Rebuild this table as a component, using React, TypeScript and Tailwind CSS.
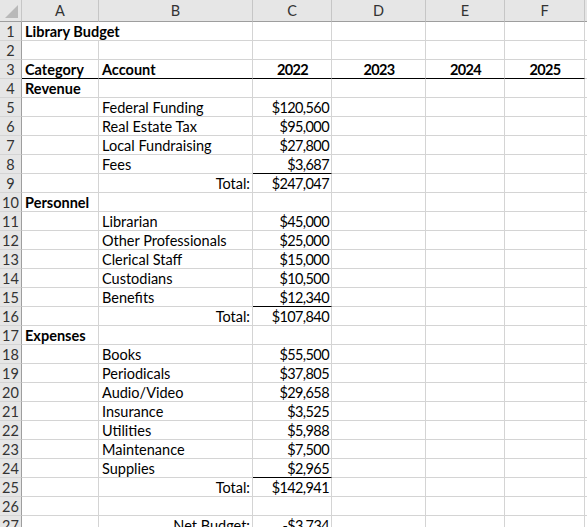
import React from "react";

type Row = {
  a?: string;
  b?: string;
  c?: string;
  d?: string;
  e?: string;
  f?: string;
  bold?: boolean;
  bRight?: boolean;
  spanA?: boolean;
  topBorderAll?: boolean;
  cBlack?: boolean;
  years?: boolean;
};

const rows: Row[] = [
  { a: "Library Budget", bold: true, spanA: true },
  {},
  { a: "Category", b: "Account", c: "2022", d: "2023", e: "2024", f: "2025", bold: true, topBorderAll: true, years: true },
  { a: "Revenue", bold: true },
  { b: "Federal Funding", c: "$120,560" },
  { b: "Real Estate Tax", c: "$95,000" },
  { b: "Local Fundraising", c: "$27,800" },
  { b: "Fees", c: "$3,687", cBlack: true },
  { b: "Total:", c: "$247,047", bRight: true },
  { a: "Personnel", bold: true },
  { b: "Librarian", c: "$45,000" },
  { b: "Other Professionals", c: "$25,000" },
  { b: "Clerical Staff", c: "$15,000" },
  { b: "Custodians", c: "$10,500" },
  { b: "Benefits", c: "$12,340", cBlack: true },
  { b: "Total:", c: "$107,840", bRight: true },
  { a: "Expenses", bold: true },
  { b: "Books", c: "$55,500" },
  { b: "Periodicals", c: "$37,805" },
  { b: "Audio/Video", c: "$29,658" },
  { b: "Insurance", c: "$3,525" },
  { b: "Utilities", c: "$5,988" },
  { b: "Maintenance", c: "$7,500" },
  { b: "Supplies", c: "$2,965", cBlack: true },
  { b: "Total:", c: "$142,941", bRight: true },
  {},
  { b: "Net Budget:", c: "-$3,734", bRight: true },
];

const cols = ["A", "B", "C", "D", "E", "F", ""];

function Cell({
  text,
  right,
  center,
  bold,
  black,
  span,
  num,
}: {
  text?: string;
  right?: boolean;
  center?: boolean;
  bold?: boolean;
  black?: boolean;
  span?: boolean;
  num?: boolean;
}) {
  return (
    <div
      className={
        "h-[19px] border-r border-b border-r-[#d4d4d4] flex items-end overflow-hidden whitespace-nowrap pl-[3px] pr-[2px] text-[14.5px] leading-[18px] text-black " +
        (black ? "border-b-black " : "border-b-[#d4d4d4] ") +
        (center ? "justify-center " : right ? "justify-end " : "justify-start ") +
        (bold ? "font-bold " : "font-normal ") +
        (span ? "col-span-2" : "")
      }
    >
      <span className={"translate-y-[0.5px] " + (num ? "tracking-[-0.6px]" : "")}>{text}</span>
    </div>
  );
}

export default function App() {
  return (
    <div
      className="w-[587px] h-[527px] overflow-hidden bg-white"
      style={{ fontFamily: "Lato, 'Open Sans', sans-serif" }}
    >
      <div className="grid grid-cols-[22px_77px_154px_79px_94px_79px_80px_1fr]">
        {/* header row */}
        <div className="h-[22px] bg-[#e6e6e6] border-r border-b border-r-[#c6c6c6] border-b-[#9e9e9e] relative">
          <svg className="absolute left-[5px] top-[5px]" width="14" height="14" viewBox="0 0 14 14">
            <polygon points="13,0 13,13 0,13" fill="#b9b9b9" />
          </svg>
        </div>
        {cols.map((c, i) => (
          <div
            key={i}
            className="h-[22px] bg-[#e6e6e6] border-r border-b border-r-[#c6c6c6] border-b-[#9e9e9e] flex items-center justify-center text-[14.5px] text-[#333]"
          >
            {c}
          </div>
        ))}
        {rows.map((r, i) => {
          const n = i + 1;
          return (
            <React.Fragment key={n}>
              <div className="h-[19px] bg-[#e6e6e6] border-r border-b border-r-[#9e9e9e] border-b-[#d4d4d4] flex items-end justify-center text-[14.5px] leading-[18px] text-[#333]">
                <span className="translate-y-[0.5px]">{n}</span>
              </div>
              {r.spanA ? (
                <Cell text={r.a} bold={r.bold} span />
              ) : (
                <>
                  <Cell text={r.a} bold={r.bold} black={r.topBorderAll} />
                  <Cell text={r.b} bold={r.bold} right={r.bRight} black={r.topBorderAll} />
                </>
              )}
              <Cell text={r.c} bold={r.bold} right center={r.years} num black={r.topBorderAll || r.cBlack} />
              <Cell text={r.d} bold={r.bold} right center={r.years} num black={r.topBorderAll} />
              <Cell text={r.e} bold={r.bold} right center={r.years} num black={r.topBorderAll} />
              <Cell text={r.f} bold={r.bold} right center={r.years} num black={r.topBorderAll} />
              <Cell />
            </React.Fragment>
          );
        })}
      </div>
    </div>
  );
}
